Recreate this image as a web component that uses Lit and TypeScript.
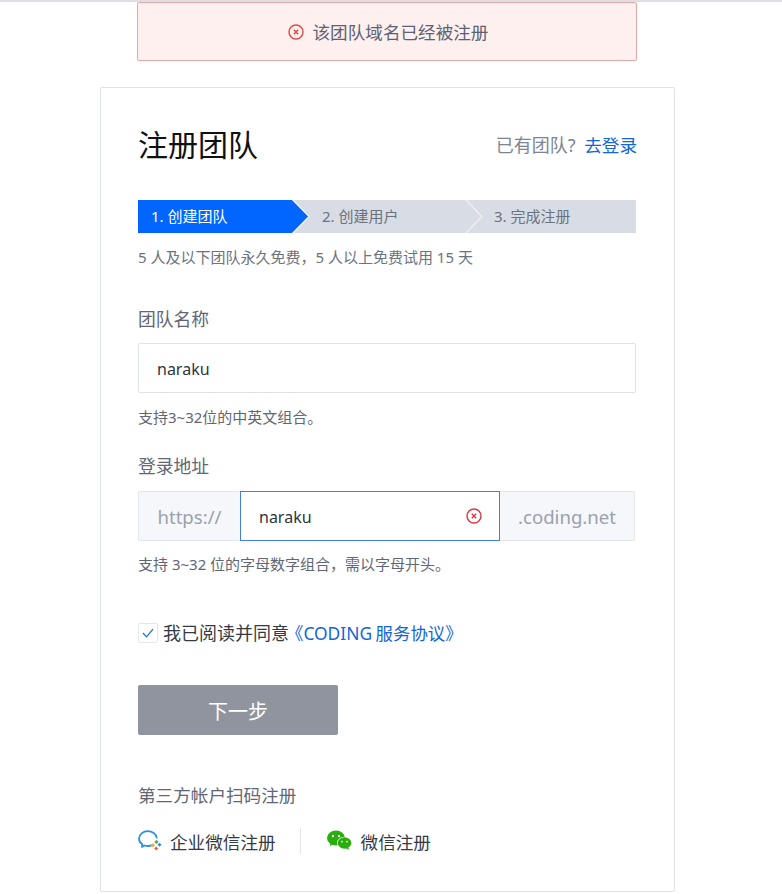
import { LitElement, html, css } from "lit";
import { customElement } from "lit/decorators.js";

const errIcon = (size: number) => html`<svg width=${size} height=${size} viewBox="0 0 16 16" fill="none" stroke="currentColor"><circle cx="8" cy="8" r="7" stroke-width="1.4"/><path d="M5.8 5.8l4.4 4.4M10.2 5.8l-4.4 4.4" stroke-width="1.4"/></svg>`;

@customElement("app-root")
export class AppRoot extends LitElement {
  static styles = css`
    :host { display: block; width: 782px; height: 894px; overflow: hidden; background: #fff; font-family: "Noto Sans", "Noto Sans CJK SC", sans-serif; color: #323a45; box-sizing: border-box; border-top: 2px solid #dcdfe4; }
    * { box-sizing: border-box; }
    .toast { margin: 0 145px 0 137px; height: 59px; background: #fff0f0; border: 1px solid #e8a6a6; border-radius: 2px; display: flex; align-items: center; justify-content: center; gap: 9px; padding-left: 2px; font-size: 17.6px; color: #5c6273; }
    .toast svg { color: #dc4a44; margin-top: 1px; }
    .card { margin: 26px 107px 0 100px; height: 805px; border: 1px solid #dfe2e7; border-radius: 2px; padding: 0 37px; display: flex; flex-direction: column; }
    .head { display: flex; justify-content: space-between; align-items: center; height: 44px; margin-top: 35px; }
    h1 { margin: 0; font-size: 30px; font-weight: 400; color: #111; line-height: 44px; }
    .login { font-size: 18px; color: #7d8594; padding-bottom: 2px; }
    a { color: #1266d8; text-decoration: none; }
    .login a { font-size: 17.6px; margin-left: 4px; }
    .steps { margin-top: 33px; height: 33px; width: 498px; background: #d8dce4; display: flex; position: relative; font-size: 15px; line-height: 33px; color: #6b7280; }
    .step { flex: none; width: 173px; }
    .step.s1 { width: 154px; padding-left: 13px; color: #fff; background: #0066ff; }
    .step.s2 { padding-left: 30px; }
    .step.s3 { flex: 1; width: auto; padding-left: 29px; }
    .arrows { position: absolute; left: 0; top: 0; }
    .note { margin: 14px 0 0; font-size: 15px; line-height: 20px; color: #6b7280; }
    .label { margin-top: 39px; font-size: 17.8px; line-height: 26px; color: #5f6675; }
    .label.second { margin-top: 26px; }
    .input { margin-top: 11px; height: 50px; width: 498px; border: 1px solid #dfe2e7; border-radius: 2px; padding-left: 18px; font-size: 16px; line-height: 50px; color: #2d3440; }
    .hint { margin-top: 14px; font-size: 15px; line-height: 20px; color: #5f6675; }
    .group { margin-top: 12px; width: 497px; height: 50px; display: flex; }
    .group + .hint { margin-top: 13px; }
    .addon { background: #f5f7fa; border: 1px solid #e3e6eb; color: #9aa1ad; font-size: 18.6px; display: flex; align-items: center; justify-content: center; border-radius: 2px; }
    .addon.pre { width: 102px; border-right: 0; }
    .addon.suf { flex: 1; border-left: 0; }
    .field { width: 260px; border: 1px solid #3f82d8; display: flex; align-items: center; justify-content: space-between; padding: 0 17px 0 18px; font-size: 16px; color: #2d3440; }
    .field span { padding-top: 2px; }
    .field svg { color: #dc3545; }
    .agree { margin-top: 46px; display: flex; align-items: center; font-size: 18px; line-height: 26px; color: #333a45; }
    .box { width: 20px; height: 20px; border: 1px solid #e3e6eb; border-radius: 2px; margin-right: 5px; display: flex; align-items: center; justify-content: center; color: #1a6ad8; }
    .proto { margin-left: -3px; font-size: 17.4px; word-spacing: -1px; }
    .btn { margin-top: 39px; width: 200px; height: 50px; border: 0; border-radius: 2px; background: #8f949e; color: #fff; font: inherit; font-size: 20px; display: flex; align-items: center; justify-content: center; }
    .third { margin-top: 47px; font-size: 17.6px; line-height: 26px; color: #5f6675; }
    .social { margin-top: 20px; display: flex; align-items: center; height: 26px; font-size: 17.6px; color: #333a45; }
    .social svg { flex: none; }
    .sep { width: 1px; height: 26px; background: #e1e4e8; margin: 0 26px 0 24px; }
    .txt { margin-left: 8px; }
    .wx { margin-top: -2px; }
    .wx + .txt { margin-left: 9px; }
  `;

  render() {
    return html`
      <div class="toast">${errIcon(16)}<span>该团队域名已经被注册</span></div>
      <div class="card">
        <div class="head"><h1>注册团队</h1><div class="login">已有团队? <a href="#">去登录</a></div></div>
        <div class="steps">
          <div class="step s1">1. 创建团队</div>
          <div class="step s2">2. 创建用户</div>
          <div class="step s3">3. 完成注册</div>
          <svg class="arrows" width="498" height="33" viewBox="0 0 498 33" fill="none">
            <path d="M154 0L171 16.500L154 33Z" fill="#0066ff"/>
            <path d="M154 -1L171 16.500L154 34" stroke="#f0f2f5" stroke-width="1.2"/>
            <path d="M327 -1L344 16.500L327 34" stroke="#f0f2f5" stroke-width="1.2"/>
          </svg>
        </div>
        <p class="note">5 人及以下团队永久免费，5 人以上免费试用 15 天</p>
        <div class="label">团队名称</div>
        <div class="input">naraku</div>
        <div class="hint">支持3~32位的中英文组合。</div>
        <div class="label second">登录地址</div>
        <div class="group">
          <div class="addon pre">https://</div>
          <div class="field"><span>naraku</span>${errIcon(16)}</div>
          <div class="addon suf">.coding.net</div>
        </div>
        <div class="hint">支持 3~32 位的字母数字组合，需以字母开头。</div>
        <div class="agree">
          <span class="box"><svg width="14" height="14" viewBox="0 0 14 14" fill="none" stroke="currentColor" stroke-width="1.2"><path d="M2 7l3.500 3.800L12 3.200"/></svg></span>
          <span>我已阅读并同意</span><a class="proto" href="#">《CODING 服务协议》</a>
        </div>
        <div class="btn">下一步</div>
        <div class="third">第三方帐户扫码注册</div>
        <div class="social">
          <svg width="24" height="22" viewBox="0 0 24 22" fill="none">
            <path d="M14.500 15.200c-1.400.5-3 .8-4.700.8-1.200 0-2.300-.2-3.300-.5l-2.600 1.400.4-2.600C2.300 13 1 10.900 1 8.600 1 4.500 5 1.200 9.800 1.200c4.500 0 8.300 2.800 8.800 6.400" stroke="#2d8fe8" stroke-width="1.800" stroke-linecap="round" stroke-linejoin="round"/>
            <path d="M18.400 9.800l2.300 2.200-2.300 2-2-2z" fill="#4caf50"/>
            <path d="M21.500 12.800l2 2-2 2-2-2z" fill="#2d8fe8"/>
            <path d="M14.800 13.200l2.200 2.100-2.100 2-2.100-2z" fill="#f5a623"/>
            <path d="M18.200 16.600l2 2-2.100 2-2-2z" fill="#e8603c"/>
          </svg>
          <span class="txt">企业微信注册</span>
          <span class="sep"></span>
          <svg class="wx" width="25" height="21" viewBox="0 0 25 21">
            <ellipse cx="9" cy="8" rx="9" ry="7.600" fill="#2aae0f"/><path d="M3.500 12.500L3 16l4-2.500z" fill="#2aae0f"/>
            <ellipse cx="17.500" cy="13" rx="7.500" ry="6.300" fill="#fff"/>
            <ellipse cx="17.500" cy="13" rx="6.800" ry="5.800" fill="#2aae0f"/><path d="M21 17l1.200 3-3.600-2z" fill="#2aae0f"/>
            <circle cx="6" cy="6.200" r="1.100" fill="#fff"/><circle cx="12" cy="6.200" r="1.100" fill="#fff"/>
            <circle cx="15" cy="11.600" r=".9" fill="#fff"/><circle cx="20" cy="11.600" r=".9" fill="#fff"/>
          </svg>
          <span class="txt">微信注册</span>
        </div>
      </div>
    `;
  }
}
